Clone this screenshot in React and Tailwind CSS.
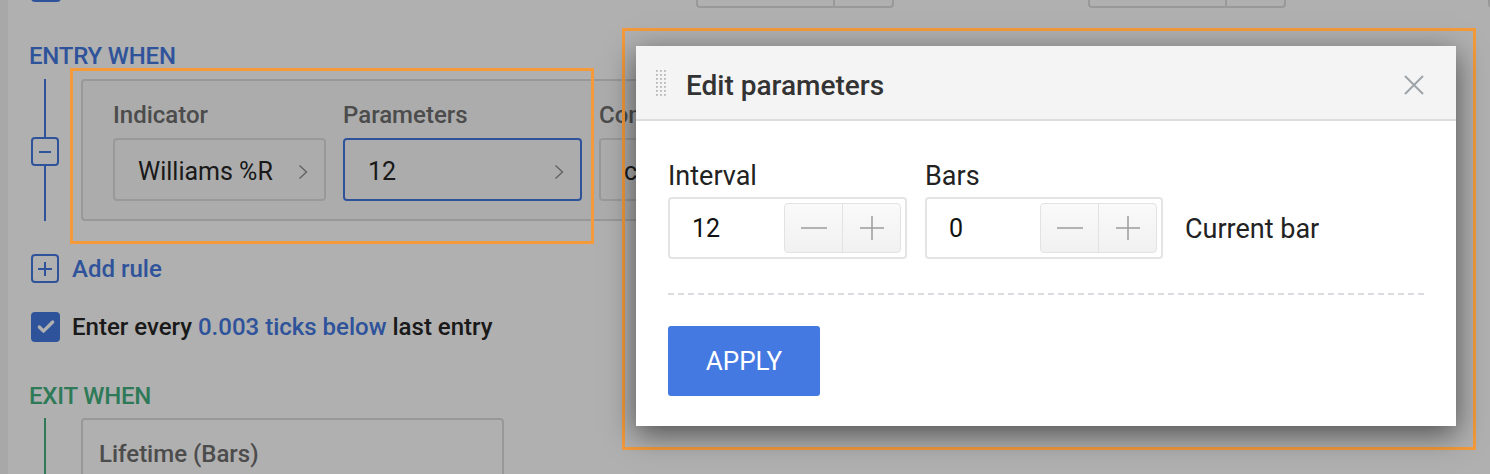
import { Check } from 'lucide-react'

const blue = 'text-[#4479e1]'

function Chevron() {
  return (
    <svg width="10" height="16" viewBox="0 0 10 16" fill="none">
      <path d="M1.5 1.5L8.5 8L1.5 14.5" stroke="#8f8f8f" strokeWidth="1.4" />
    </svg>
  )
}

function SelectBox({ label, value, width, active }) {
  return (
    <div className="flex shrink-0 flex-col" style={{ width }}>
      <span className="mb-[9px] text-[24px] leading-[28px] font-medium text-[#6e6e6e]">{label}</span>
      <div
        className={`flex h-[63px] items-center justify-between rounded-[4px] pl-[23px] pr-[16px] pt-[4px] text-[25px] text-[#262626] ${
          active ? 'border-2 border-[#4479e1]' : 'border-2 border-[#dedede]'
        }`}
      >
        <span>{value}</span>
        {value && <Chevron />}
      </div>
    </div>
  )
}

function Stepper() {
  return (
    <div className="flex h-[50px] w-[117px] rounded-[4px] border border-[#e2e2e2] bg-gradient-to-b from-[#fafafa] to-[#f1f1f1]">
      <div className="flex w-[58px] items-center justify-center border-r border-[#e2e2e2]">
        <svg width="26" height="2" viewBox="0 0 26 2">
          <path d="M0 1H26" stroke="#9c9c9c" strokeWidth="1.5" />
        </svg>
      </div>
      <div className="flex flex-1 items-center justify-center">
        <svg width="24" height="24" viewBox="0 0 24 24">
          <path d="M0 12H24M12 0V24" stroke="#9c9c9c" strokeWidth="1.5" />
        </svg>
      </div>
    </div>
  )
}

function NumberField({ label, value, width }) {
  return (
    <div className="flex flex-col" style={{ width }}>
      <span className="mb-[5px] text-[27px] leading-[32px] text-[#222]">{label}</span>
      <div className="flex h-[62px] items-center justify-between rounded-[4px] border-2 border-[#e4e4e4] pl-[22px] pr-[4px]">
        <span className="pt-[2px] text-[25px] text-[#111]">{value}</span>
        <Stepper />
      </div>
    </div>
  )
}

function DragHandle() {
  const dots = []
  for (let r = 0; r < 7; r++) {
    for (let c = 0; c < 3; c++) {
      dots.push(<rect key={`${r}-${c}`} x={c * 4} y={r * 4} width="1.8" height="1.8" fill="#b8b8b8" />)
    }
  }
  return (
    <svg width="11" height="26" viewBox="0 0 11 26">
      {dots}
    </svg>
  )
}

export default function App() {
  return (
    <div className="relative h-[474px] w-[1490px] overflow-hidden bg-white font-['Roboto',sans-serif]">
      <div className="flex h-full">
        <div className="w-[8px] shrink-0 bg-[#f3f3f3]" />
        <div className="min-w-0 flex-1 pl-[21px]">
          {/* tail of the previous row */}
          <div className="flex h-[8px] items-end overflow-hidden">
            <div className="mb-[6px] ml-[2px] h-[30px] w-[30px] shrink-0 rounded-[4px] border-2 border-[#4479e1]" />
            <div className="ml-[635px] flex h-[40px] w-[198px] shrink-0 rounded-[4px] border-2 border-[#dedede]">
              <div className="w-[137px] border-r-2 border-[#dedede]" />
            </div>
            <div className="ml-[194px] flex h-[40px] w-[198px] shrink-0 rounded-[4px] border-2 border-[#dedede]">
              <div className="w-[137px] border-r-2 border-[#dedede]" />
            </div>
            <div className="ml-[202px] h-[40px] w-[40px] shrink-0 rounded-[4px] border-2 border-[#dedede]" />
          </div>

          <div className={`mt-[34px] text-[24px] leading-[28px] font-medium tracking-[-0.2px] ${blue}`}>ENTRY WHEN</div>

          {/* rule */}
          <div className="mt-[9px] flex pb-[33px]">
            <div className="flex w-[32px] shrink-0 flex-col items-center">
              <div className="h-[58px] w-[2px] bg-[#4479e1]" />
              <div className="flex h-[29px] w-[28px] items-center justify-center rounded-[4px] border-2 border-[#4479e1]">
                <div className="h-[2px] w-[12px] bg-[#4479e1]" />
              </div>
              <div className="w-[2px] flex-1 bg-[#4479e1]" />
            </div>
            <div className="ml-[20px] flex h-[142px] w-[560px] shrink-0 gap-[17px] overflow-hidden rounded-[4px] border-2 border-[#dcdcdc] bg-[#fafafa] pl-[30px] pt-[20px]">
              <SelectBox label="Indicator" value="Williams %R" width={213} />
              <SelectBox label="Parameters" value="12" width={239} active />
              <SelectBox label="Condition" value="crosses" width={213} />
            </div>
          </div>

          <div className="flex items-center">
            <div className="ml-[2px] flex h-[29px] w-[28px] items-center justify-center rounded-[4px] border-2 border-[#4479e1]">
              <svg width="14" height="14" viewBox="0 0 14 14">
                <path d="M0 7H14M7 0V14" stroke="#4479e1" strokeWidth="2" />
              </svg>
            </div>
            <span className={`ml-[13px] text-[24px] leading-[28px] font-medium ${blue}`}>Add rule</span>
          </div>

          <div className="mt-[29px] flex items-center">
            <div className="ml-[2px] flex h-[30px] w-[29px] items-center justify-center rounded-[4px] bg-[#4479e1]">
              <Check size={20} color="white" strokeWidth={4} />
            </div>
            <span className="ml-[12px] text-[24px] leading-[28px] font-medium text-[#262626]">
              Enter every <span className={blue}>0.003 ticks below</span> last entry
            </span>
          </div>

          <div className="mt-[40px] text-[24px] leading-[28px] font-medium tracking-[-0.2px] text-[#43b180]">EXIT WHEN</div>

          <div className="mt-[8px] flex">
            <div className="flex w-[32px] shrink-0 justify-center">
              <div className="h-[60px] w-[2px] bg-[#43b180]" />
            </div>
            <div className="ml-[20px] h-[80px] w-[423px] shrink-0 rounded-[4px] border-2 border-[#dcdcdc] pl-[16px] pt-[20px]">
              <span className="text-[24px] leading-[28px] font-medium text-[#6e6e6e]">Lifetime (Bars)</span>
            </div>
          </div>
        </div>
      </div>

      {/* dimming overlay */}
      <div className="absolute inset-0 bg-black/[0.31]" />

      {/* annotation frames */}
      <div className="absolute left-[70px] top-[68px] h-[176px] w-[524px] border-[3px] border-[#f49a3a]" />
      <div className="absolute left-[622px] top-[28px] h-[422px] w-[854px] border-[3px] border-[#f49a3a]" />

      {/* dialog */}
      <div className="absolute left-[636px] top-[46px] flex h-[380px] w-[820px] flex-col bg-white shadow-[0_8px_28px_rgba(0,0,0,0.55)]">
        <div className="flex h-[75px] items-center border-b-2 border-[#dddddd] bg-[#f4f4f4] pl-[20px] pr-[32px]">
          <DragHandle />
          <span className="ml-[19px] mt-[5px] text-[28px] leading-[33px] font-medium text-[#333]">Edit parameters</span>
          <svg className="ml-auto mt-[4px]" width="20" height="20" viewBox="0 0 20 20">
            <path d="M1 1L19 19M19 1L1 19" stroke="#9ea3a8" strokeWidth="2" />
          </svg>
        </div>
        <div className="flex flex-1 flex-col px-[32px] pt-[39px]">
          <div className="flex items-end gap-[18px]">
            <NumberField label="Interval" value="12" width={239} />
            <NumberField label="Bars" value="0" width={238} />
            <div className="ml-[4px] flex h-[62px] items-center pt-[2px] text-[27px] text-[#222]">Current bar</div>
          </div>
          <div className="mt-[34px] border-t-2 border-dashed border-[#dadce0]" />
          <div className="mt-[31px]">
            <button className="h-[70px] w-[152px] rounded-[3px] bg-[#4479e1] text-[26px] text-white">APPLY</button>
          </div>
        </div>
      </div>
    </div>
  )
}
